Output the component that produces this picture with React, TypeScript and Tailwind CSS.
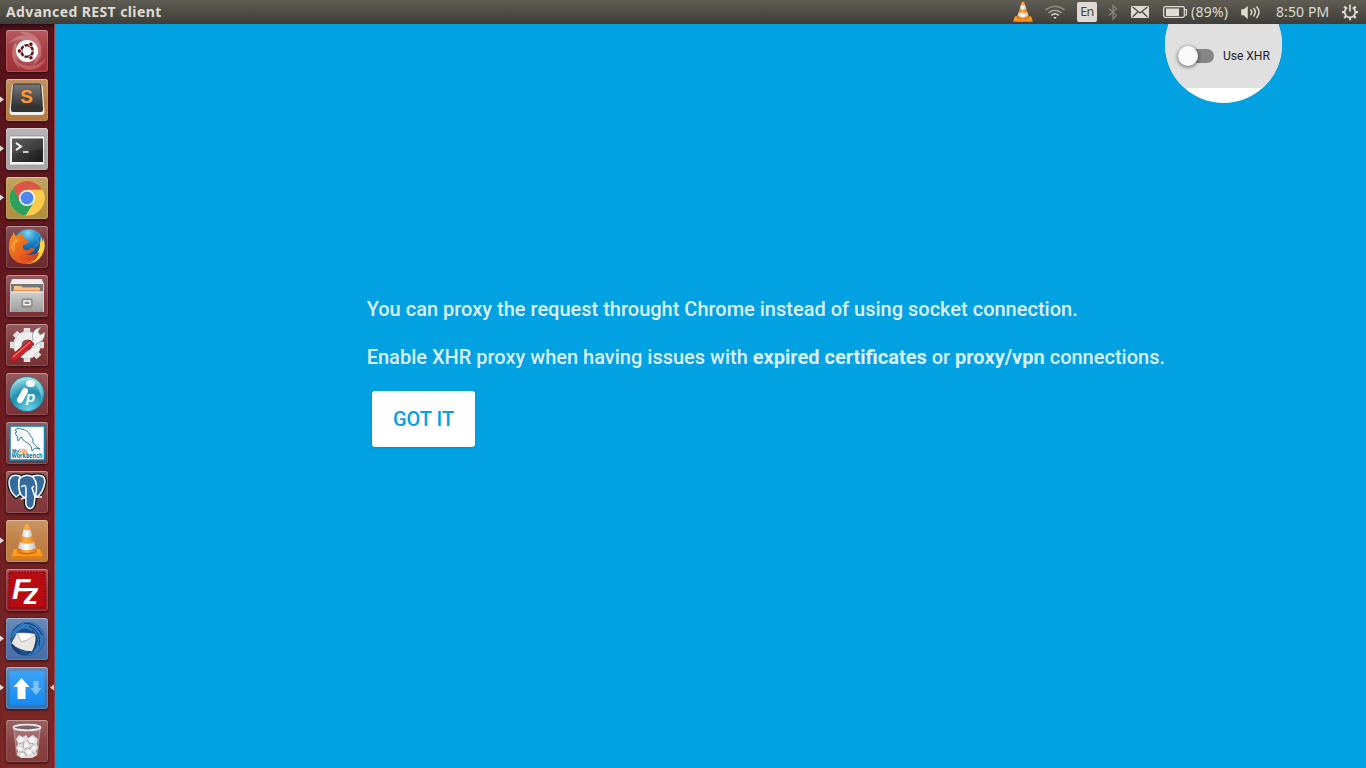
import type { ReactNode } from "react";

function Cone() {
  return (
    <g>
      <path d="M8 29 L34 29 L37 37 Q37 38.500 35 38.500 L7 38.500 Q5 38.500 5 37Z" fill="#e77b0c" />
      <path d="M8 29 H34 L36.500 36 H5.500Z" fill="#fb9b20" />
      <ellipse cx="21" cy="31.500" rx="10" ry="3" fill="#d96b05" />
      <path d="M19 5 Q21 3 23 5 L31 31 Q21 35 11 31Z" fill="url(#cone)" />
      <path d="M17.600 9.500 Q21 11 24.400 9.500 L26.300 16 Q21 18.500 15.700 16Z" fill="url(#steel)" />
      <path d="M13.800 22 Q21 25.500 28.200 22 L30 28 Q21 32.500 12 28Z" fill="url(#steel)" />
    </g>
  );
}

function Defs() {
  return (
    <svg className="absolute size-0" aria-hidden="true">
      <defs>
        <linearGradient id="cone"><stop stopColor="#dc6b08" /><stop offset=".45" stopColor="#ffac42" /><stop offset="1" stopColor="#e87406" /></linearGradient>
        <linearGradient id="steel"><stop stopColor="#c5c5c5" /><stop offset=".45" stopColor="#fff" /><stop offset="1" stopColor="#bcbcbc" /></linearGradient>
        <linearGradient id="dark" x2="0" y2="1"><stop stopColor="#777" /><stop offset="1" stopColor="#303030" /></linearGradient>
        <linearGradient id="term" x2="1" y2="1"><stop stopColor="#555" /><stop offset="1" stopColor="#171717" /></linearGradient>
        <linearGradient id="fox" x2="1" y2="1"><stop stopColor="#f49a28" /><stop offset=".5" stopColor="#e9641e" /><stop offset="1" stopColor="#cf2f20" /></linearGradient>
        <radialGradient id="globe" cx=".5" cy=".1" r=".75"><stop stopColor="#7ad8f5" /><stop offset=".45" stopColor="#1782c4" /><stop offset="1" stopColor="#123e79" /></radialGradient>
        <radialGradient id="aqua" cx=".55" cy=".95" r=".9"><stop stopColor="#65d3e7" /><stop offset=".6" stopColor="#2290ae" /><stop offset="1" stopColor="#92d8e4" /></radialGradient>
        <linearGradient id="blue" x2="0" y2="1"><stop stopColor="#3ba4f9" /><stop offset="1" stopColor="#168af0" /></linearGradient>
        <linearGradient id="cab" x2="0" y2="1"><stop stopColor="#d1d1d1" /><stop offset="1" stopColor="#9b9b9b" /></linearGradient>
        <radialGradient id="swirl"><stop offset=".5" stopColor="#e8b2b2" stopOpacity=".8" /><stop offset="1" stopColor="#e8b2b2" stopOpacity="0" /></radialGradient>
      </defs>
    </svg>
  );
}

function Ubuntu() {
  return (
    <>
      <g fill="#f0c2c2" opacity=".3">
        <path d="M2 14Q14 0 27 8Q38 16 34 30Q33 14 21 10Q11 8 2 14Z" />
        <path d="M13 2Q31 0 35 17Q36 29 27 36Q33 21 26 11Q21 5 13 2Z" />
        <path d="M8 18Q6 31 18 35Q31 38 40 28Q36 39 23 40Q7 38 8 18Z" />
        <path d="M9 12Q1 29 15 40Q8 29 12 19Z" />
      </g>
      <circle cx="21" cy="21" r="17" fill="url(#swirl)" opacity=".4" />
      <circle cx="21" cy="21" r="11" fill="#fff" />
      <circle cx="21" cy="21" r="5.800" fill="none" stroke="#5c151b" strokeWidth="2.600" />
      <g stroke="#fff" strokeWidth="1.200"><path d="M21 21H30M21 21L16.500 13.200M21 21L16.500 28.800" /></g>
      <circle cx="21" cy="21" r="4.300" fill="#fff" />
      <g fill="#5c151b" stroke="#fff" strokeWidth=".8"><circle cx="13.400" cy="21" r="2.200" /><circle cx="24.900" cy="14.200" r="2.200" /><circle cx="24.900" cy="27.800" r="2.200" /></g>
    </>
  );
}

function Sublime() {
  return (
    <>
      <path d="M6 7 Q6 5 9 5H33Q36 5 36.500 7L38.500 33Q38.500 36 35 36H7Q3.500 36 3.500 33Z" fill="#eee" />
      <path d="M7 6Q7 4.500 9 4.500H33Q35 4.500 35.200 6L37 28V31Q37 33 35 33H7Q5 33 5 31V28Z" fill="#333" />
      <path d="M8 5.500H34L36 27Q36 28.500 34 28.500H8Q6 28.500 6 27Z" fill="url(#dark)" />
      <text x="20.500" y="23.500" textAnchor="middle" fontSize="19" fontWeight="700" fontFamily="Liberation Sans" fill="#ff992b">S</text>
    </>
  );
}

function Terminal() {
  return (
    <>
      <rect x="3.500" y="8" width="35" height="29" rx="1" fill="#f4f4f4" stroke="#888" strokeWidth=".6" />
      <rect x="6" y="10.500" width="31" height="23.500" fill="url(#term)" />
      <path d="M6 10.500H37V21L6 26Z" fill="#fff" opacity=".06" />
      <path d="M10 15L15 18.500L10 22" fill="none" stroke="#fff" strokeWidth="2" />
      <path d="M17 24H22.500" stroke="#fff" strokeWidth="1.500" />
    </>
  );
}

function Chrome() {
  return (
    <>
      <circle cx="21" cy="21" r="17.500" fill="#fdcb4c" />
      <path d="M21 21L5.850 12.250A17.500 17.500 0 0 0 20 38.480L28 25Z" fill="#2da15e" />
      <path d="M21 12.700H36.400A17.500 17.500 0 0 1 20 38.480L28.300 25Z" fill="#fdcb4c" />
      <path d="M7 11A17.500 17.500 0 0 1 36.400 12.700H21L14 25Z" fill="#db5849" />
      <path d="M7 10.500L13.600 24.800L21 21L13 30L4 24Z" fill="#2da15e" />
      <circle cx="21" cy="21" r="8.100" fill="#f5f8f5" />
      <circle cx="21" cy="21" r="6.500" fill="#4d87ef" />
    </>
  );
}

function Firefox() {
  return (
    <>
      <circle cx="22" cy="20" r="16.500" fill="url(#globe)" />
      <path d="M22 4Q29 3 34 9L30 12L33 17L28 21" fill="none" stroke="#69bce4" strokeWidth="1.500" opacity=".4" />
      <path d="M35 10Q36 13 36 16Q37 14 37 12Q41 21 36 29Q31 38 19 38Q27 34 29 29Q34 25 34 18Z" fill="#ffd739" />
      <path d="M3 20Q3 12 7 9L7 6L10 10Q14 8 16 6Q16 10 19 13L23 15Q22 18 17 19Q16 22 19 24Q22 25 25 22Q28 22 29 23Q26 28 20 28Q27 30 33 26Q32 33 26 36Q15 41 7 33Q2 28 3 20Z" fill="url(#fox)" />
      <path d="M9 13L13 14L9 18L8 27L5 21" fill="#ffb83c" opacity=".55" />
      <path d="M12 34Q20 38 27 34" fill="none" stroke="#ef7922" strokeWidth="1" opacity=".6" />
    </>
  );
}

function Files() {
  return (
    <>
      <path d="M6 4H36L38 10V37H4V10Z" fill="#ccc" />
      <path d="M7 4H35L38 9H4Z" fill="#eee" />
      <path d="M5 9H37V19H5Z" fill="#777" />
      <path d="M8 12H33L34 19H7Z" fill="#ed9550" /><path d="M8 11H15L17 13H34V15H8Z" fill="#f7c18d" />
      <path d="M5 16.500H37V37H5Z" fill="url(#cab)" /><path d="M5 17H37" stroke="#eee" />
      <rect x="16" y="24" width="10" height="8" rx="1" fill="#aaa" stroke="#666" strokeWidth=".7" />
      <rect x="18" y="26" width="6" height="3.500" fill="#888" stroke="#fff" strokeWidth="1.200" />
    </>
  );
}

function Settings() {
  return (
    <>
      <g stroke="#e1e1e1" strokeWidth="6.500"><path d="M21 4V38M4 21H38M9 9L33 33M9 33L33 9" /></g>
      <circle cx="21" cy="21" r="13.500" fill="#eee" stroke="#d4d4d4" />
      <circle cx="21" cy="21" r="5.500" fill="#925453" />
      <path d="M23 21L27 16Q25 9 30 5L35 3L32 8L34 11L39 8Q39 17 32 19L26 24Z" fill="#f5f5f5" stroke="#888" strokeWidth=".7" />
      <path d="M24 16L28 20L11 36Q8 39 5.500 36.500Q3.500 34 6 31Z" fill="#cc252b" stroke="#941e22" />
      <path d="M24 18L7 33" stroke="#ef7474" strokeWidth="1.200" />
    </>
  );
}

function NetworkTool() {
  return (
    <>
      <circle cx="21" cy="21" r="17.500" fill="url(#aqua)" stroke="#236270" strokeWidth=".8" />
      <path d="M6 14Q15 1 30 7Q39 14 36 28Q33 10 22 7Q12 7 6 14Z" fill="#9ceaf3" opacity=".5" />
      <ellipse cx="24.500" cy="10.500" rx="4.500" ry="3.500" fill="#fff" />
      <path d="M19 18L14 27" stroke="#fff" strokeWidth="6" strokeLinecap="round" />
      <text x="20" y="28.500" fontSize="15" fontWeight="700" fontStyle="italic" fontFamily="Liberation Sans" fill="#fff">p</text>
    </>
  );
}

function Workbench() {
  return (
    <>
      <rect x="4" y="4" width="34.500" height="34" fill="#fff" stroke="#1686b5" strokeWidth="1.600" />
      <path d="M9 8Q12 5 15 7Q22 8 24 13Q28 17 27 21Q30 25 34 27L29 26L26 29Q26 24 23 22Q18 20 15 15L12 19Q12 14 9 11L11 10Z" fill="#f7fbfd" stroke="#226f91" strokeWidth=".9" />
      <text x="6" y="31" fontSize="4.500" fontWeight="800" fontFamily="Open Sans" fill="#1388bb">My<tspan fill="#ef981d">SQL</tspan></text>
      <text x="5.500" y="36.300" textLength="31" lengthAdjust="spacingAndGlyphs" fontSize="6.300" fontWeight="700" fontFamily="Open Sans" fill="#086a96">Workbench</text>
    </>
  );
}

function Postgres() {
  return (
    <>
      <g fill="#336b9d" stroke="#111" strokeWidth="4" strokeLinejoin="round">
        <path d="M14 5Q4 2 3 11Q3 20 10 26L14 23Q12 12 14 5Z" /><path d="M27 5Q39 2 39 11Q37 22 31 26L28 22Z" />
        <path d="M14 7Q20 2 27 6Q33 13 29 26L28 34Q26 39 22 37Q19 35 20 28L15 24Q11 15 14 7Z" />
      </g>
      <g fill="#336b9d" stroke="#fff" strokeWidth="1.500" strokeLinejoin="round">
        <path d="M14 5Q4 2 3 11Q3 20 10 26L14 23Q12 12 14 5Z" /><path d="M27 5Q39 2 39 11Q37 22 31 26L28 22Z" />
        <path d="M14 7Q20 2 27 6Q33 13 29 26L28 34Q26 39 22 37Q19 35 20 28L15 24Q11 15 14 7Z" />
        <path d="M15 16Q20 12 20 18V26L15 28M28 15L26 17L29 26H36" fill="none" />
      </g>
    </>
  );
}

function FileZilla() {
  return (
    <>
      <rect x="3" y="3" width="36" height="36" fill="#b80c12" stroke="#690c12" strokeDasharray="2 1" />
      <text x="6" y="30" fontSize="30" fontWeight="700" fontStyle="italic" fontFamily="Liberation Sans" fill="#fff">F<tspan dx="-6.500" dy="4.500" fontSize="29">z</tspan></text>
    </>
  );
}

function Thunderbird() {
  return (
    <>
      <circle cx="21.500" cy="21" r="17" fill="#1d4e92" />
      <path d="M12 9Q17 2 29 5Q41 14 37 27Q32 38 19 38Q30 33 31 21Q30 14 22 11Q15 9 9 17L5 21Q6 12 12 9Z" fill="#3279bf" />
      <g fill="none" stroke="#143261" strokeWidth="1"><path d="M18 5Q31 5 36 17M23 8Q36 14 33 28M26 12Q37 22 25 36M30 23Q29 31 21 36" /></g>
      <path d="M5 26L11 15Q20 14 29 16Q31 24 26 33Q17 34 5 26Z" fill="#e9e6df" />
      <path d="M11 15L15 24Q22 23 29 17" fill="#fff" stroke="#aaa" strokeWidth=".8" />
      <path d="M5 25Q6 35 17 37Q11 33 8 27Z" fill="#173b76" />
    </>
  );
}

function RestClient() {
  return (
    <>
      <rect x="4" y="4" width="34.500" height="34" rx="1" fill="url(#blue)" />
      <path d="M15.500 11L23.500 20H19.500V32H11.500V20H7.500Z" fill="#fff" />
      <path d="M27.500 14H32.500V21H35.500L30 28L24.500 21H27.500Z" fill="#7fc0f8" />
    </>
  );
}

function Trash() {
  return (
    <>
      <path d="M7 7H35L32 36Q21 40 10 36Z" fill="#d4b8b9" opacity=".3" />
      <path d="M10 19L13 15L17 17L20 15L22 18L27 15L32 19L31 24L32 28L30 31L31 35L26 38H15L11 35L12 31L10 28L12 24Z" fill="#dedede" />
      <g fill="#f5f5f5"><circle cx="15" cy="20" r="2.500" /><circle cx="26" cy="20" r="3" /><circle cx="20" cy="25" r="2.500" /><circle cx="14" cy="29" r="2" /><circle cx="28" cy="28" r="2" /><circle cx="23" cy="32" r="2.500" /><circle cx="16" cy="35" r="2" /></g>
      <path d="M13 24L18 22L17 28M21 20L23 23L28 24L24 28M18 30L21 28L25 29M13 32L18 32L21 36M26 32L29 34" fill="none" stroke="#a8a1a1" strokeWidth=".9" />
      <ellipse cx="21" cy="7.500" rx="13.500" ry="2.800" fill="#776363" stroke="#e9e9e9" strokeWidth="1.800" />
      <path d="M8 9L11 34M34 9L31 34" stroke="#fff" opacity=".25" />
    </>
  );
}

type App = { name: string; color: string; icon: ReactNode; running?: boolean; active?: boolean };
const apps: App[] = [
  { name: "Dash", color: "bg-[#a33339]", icon: <Ubuntu /> },
  { name: "Sublime Text", color: "bg-[#b5793d]", icon: <Sublime />, running: true },
  { name: "Terminal", color: "bg-[#aaa4a7]", icon: <Terminal />, running: true },
  { name: "Chrome", color: "bg-[#b0903f]", icon: <Chrome />, running: true },
  { name: "Firefox", color: "bg-[#6d282f]", icon: <Firefox /> },
  { name: "Files", color: "bg-[#7b3035]", icon: <Files /> },
  { name: "Settings", color: "bg-[#7c3034]", icon: <Settings /> },
  { name: "Network", color: "bg-[#7d3337]", icon: <NetworkTool /> },
  { name: "Workbench", color: "bg-[#71383e]", icon: <Workbench /> },
  { name: "Postgres", color: "bg-[#81363a]", icon: <Postgres /> },
  { name: "VLC", color: "bg-[#bd7b3d]", icon: <Cone />, running: true },
  { name: "FileZilla", color: "bg-[#981d23]", icon: <FileZilla /> },
  { name: "Thunderbird", color: "bg-[#496fa8]", icon: <Thunderbird />, running: true },
  { name: "REST client", color: "bg-[#3b72ad]", icon: <RestClient />, running: true, active: true },
  { name: "Trash", color: "bg-[#843b3c]", icon: <Trash /> },
];

function Tile({ app }: { app: App }) {
  return (
    <div className={`flex h-[42px] w-full shrink-0 items-center ${app.name === "Trash" ? "mt-1" : ""}`}>
      <div className="flex w-1.5 shrink-0 justify-start">
        {app.running && <svg width="4" height="8"><path d="M0 0.500L4 3.500L0 6.500Z" fill="#dedbd9" /></svg>}
      </div>
      <div className={`size-[42px] shrink-0 overflow-hidden rounded-[3px] shadow-[0_1px_3px_#260b12,inset_0_0_0_1px_#ffffff25,inset_0_1px_#ffffff45] ${app.color}`}>
        <svg width="42" height="42" viewBox="0 0 42 42" className="bg-linear-to-b from-white/20 via-white/5 to-transparent">{app.icon}</svg>
      </div>
      <div className="flex w-1.5 shrink-0 justify-end">
        {app.active && <svg width="4" height="8"><path d="M4 0.500L0 3.500L4 6.500Z" fill="#e4d9d8" /></svg>}
      </div>
    </div>
  );
}

function TopBar() {
  return (
    <header className="flex h-6 shrink-0 items-center bg-linear-to-b from-[#5f5d53] to-[#3e3d38] pl-1.5 font-['Noto_Sans',sans-serif] text-[14px] leading-6 text-[#dfdbd2]">
      <span className="w-40 shrink-0 whitespace-nowrap text-[14px] font-bold tracking-[0.4px]">Advanced REST client</span>
      <div className="ml-auto flex h-6 w-[354px] shrink-0 items-center">
        <svg width="22" height="24" viewBox="3 1 36 41" preserveAspectRatio="none"><Cone /></svg>
        <svg className="ml-2.5" width="22" height="24" viewBox="0 0 22 24" fill="none" strokeWidth="1.600">
          <path d="M1.500 10Q11 2.500 20.500 10" stroke="#8b8981" /><path d="M4.500 13Q11 7.500 17.500 13" stroke="#aaa79e" /><path d="M7.300 15.500Q11 12 14.700 15.500" stroke="#dfdbd2" /><path d="M9.200 17H12.800L11 19Z" fill="#dfdbd2" />
        </svg>
        <span className="ml-[11px] flex h-5 w-5 shrink-0 items-center justify-center rounded-[2px] bg-[#dfdbd2] text-[12.5px] leading-5 tracking-[-0.5px] text-[#45443e]">En</span>
        <svg className="ml-2.5" width="12" height="24" viewBox="0 0 12 24" fill="none" stroke="#88867e" strokeWidth="1.200"><path d="M2 8.500L9.500 15.500L6 19V5.500L9.500 8.500L2 15.500" /></svg>
        <svg className="ml-3" width="18" height="24" viewBox="0 0 18 24"><rect y="6" width="18" height="12" rx="1" fill="#dfdbd2" /><path d="M1.500 7L9 13L16.500 7M1.500 17L7 11.700M16.500 17L11 11.700" fill="none" stroke="#464540" strokeWidth="1.200" /></svg>
        <svg className="ml-3.5" width="25" height="24" viewBox="0 0 25 24"><rect x=".7" y="6.700" width="20.600" height="10.600" rx="1.500" fill="none" stroke="#dfdbd2" strokeWidth="1.300" /><rect x="3" y="8.500" width="13" height="7.500" fill="#dfdbd2" /><path d="M21.500 9.500H23.500V15H21.500" fill="none" stroke="#dfdbd2" strokeWidth="1.200" /></svg>
        <span className="ml-[3px] w-[39px] shrink-0 whitespace-nowrap text-[14px] tracking-[0.25px]">(89%)</span>
        <svg className="ml-[11px]" width="21" height="24" viewBox="0 0 21 24" fill="none" stroke="#dfdbd2" strokeWidth="1.500"><path d="M1 10H3L6 7.500V17.500L3 14.500H1Z" fill="#dfdbd2" /><path d="M9.500 9.500Q12 12 9.500 15M12.500 8Q16 12 12.500 16.500M15.500 6.500Q20.500 12 15.500 18" /></svg>
        <span className="ml-[14px] w-[55px] shrink-0 whitespace-nowrap text-[14px] tracking-[0.1px]">8:50 PM</span>
        <svg className="ml-[10px]" width="18" height="24" viewBox="0 0 18 24" fill="none" stroke="#dfdbd2" strokeWidth="1.700"><path d="M6.300 7.500A5.300 5.300 0 1 0 11.700 7.500M9 4.500V11.500" /><path d="M1 12.200H3.700M14.300 12.200H17M3.200 6.500L5 8.300M13 8.300L14.800 6.500M3.200 18L5 16.200M13 16.200L14.800 18M9 17.500V20.200" strokeWidth="2.200" /></svg>
      </div>
    </header>
  );
}

export default function App() {
  return (
    <div className="flex h-screen min-h-[768px] w-full flex-col overflow-hidden bg-[#02a1e2]">
      <Defs />
      <TopBar />
      <div className="flex min-h-0 flex-1">
        <nav className="flex w-[55px] shrink-0 flex-col gap-[7px] border-r border-[#9b3e46] bg-linear-to-b from-[#57131b] via-[#6c1c21] to-[#7d2926] pt-1.5 shadow-[inset_0_5px_5px_-3px_#260911]">
          {apps.map((app) => <Tile key={app.name} app={app} />)}
        </nav>
        <main className="relative min-w-0 flex-1 overflow-hidden font-['Roboto',sans-serif]">
          <div className="absolute -top-[38px] left-[1110px] size-[117px] overflow-hidden rounded-full bg-white">
            <div className="flex h-[102px] items-end bg-[#e0e0e0] pb-[21px] pl-[13px]">
              <div className="relative flex h-[22px] w-9 items-center">
                <span className="h-3.5 w-9 rounded-full bg-[#858585]" />
                <span className="absolute left-0 top-px size-5 rounded-full bg-[#fafafa] shadow-[0_1px_4px_#0009]" />
              </div>
              <span className="ml-[9px] whitespace-nowrap text-[12px] leading-[22px] text-[#212121]">Use XHR</span>
            </div>
          </div>
          <section className="flex flex-col items-start pl-[311.7px] pt-[273px] text-[20px] leading-6 text-white/87">
            <p className="whitespace-nowrap font-medium">You can proxy the request throught Chrome instead of using socket connection.</p>
            <p className="mt-6 whitespace-nowrap font-medium">Enable XHR proxy when having issues with <strong className="font-bold">expired certificates</strong> or <strong className="font-bold">proxy/vpn</strong> connections.</p>
            <button className="ml-[5.3px] mt-[22px] flex h-14 w-[103px] items-center justify-center rounded-[3px] bg-white font-medium text-[#02a1e2] shadow-[0_1px_2px_#006fa066]">GOT IT</button>
          </section>
        </main>
      </div>
    </div>
  );
}
